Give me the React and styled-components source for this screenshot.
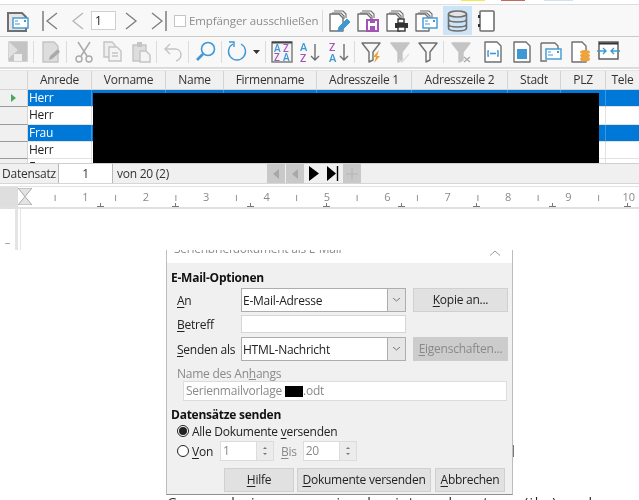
import React from 'react';
import styled, { createGlobalStyle } from 'styled-components';

const Global = createGlobalStyle`
  html, body { margin: 0; padding: 0; background: #fff; }
  body { font-family: "Open Sans", "Noto Sans", sans-serif; color: #333; letter-spacing: -0.25px; }
`;

const Page = styled.div`
  position: relative;
  width: 639px;
  height: 500px;
  overflow: hidden;
  background: #fff;
  filter: blur(0.35px);
`;

const TopStrip = styled.div`
  height: 4px;
  display: flex;
  padding-left: 461px;
  border-bottom: 1px solid #dedede;
  background: #fff;
`;
const TabMark = styled.div`
  width: ${p => p.$w}px;
  margin-right: ${p => p.$mr}px;
  height: 1px;
  background: ${p => p.$c};
`;

const Toolbar = styled.div`
  height: ${p => p.$h}px;
  display: flex;
  align-items: center;
  background: #f8f8f8;
  border-bottom: ${p => p.$line};
`;
const Tool = styled.div`
  flex: none;
  width: ${p => p.$w}px;
  height: ${p => p.$h || 22}px;
  margin-left: ${p => p.$ml}px;
  display: flex;
  align-items: center;
  justify-content: center;
  background: ${p => (p.$on ? '#cde4f7' : 'transparent')};
  svg { display: block; overflow: visible; }
`;
const Sep = styled.div`
  flex: none;
  width: 1px;
  height: 22px;
  margin-left: ${p => p.$ml}px;
  background: #dcdcdc;
`;
const PageInput = styled.div`
  flex: none;
  width: 25px;
  height: 19px;
  margin-left: ${p => p.$ml}px;
  box-sizing: border-box;
  border: 1px solid #d0d0d0;
  background: #fff;
  font-size: 12px;
  line-height: 17px;
  padding-left: 3px;
  color: #222;
`;
const Check = styled.div`
  flex: none;
  width: 12px;
  height: 12px;
  margin-left: 7px;
  border: 1px solid #c4c4c4;
  background: #fff;
  box-sizing: border-box;
`;
const CheckLabel = styled.span`
  flex: none;
  margin-left: 3px;
  font-size: 11.5px;
  letter-spacing: -0.1px;
  color: #8c8c8c;
  white-space: nowrap;
  width: 130px;
`;

const Table = styled.div`
  position: relative;
  height: 93px;
  margin-top: 1px;
  overflow: hidden;
  display: grid;
  grid-template-columns: 28px 64px 74px 58px 93px 95px 96px 53px 45px 34px;
  grid-template-rows: 19px repeat(5, 17.3px);
  background: #fff;
  border-top: 1px solid #e4e4e4;
  box-sizing: border-box;
`;
const Head = styled.div`
  background: #f0f0f0;
  border-right: 1px solid #d4d4d4;
  border-bottom: 1px solid #d4d4d4;
  font-size: 12px;
  line-height: 18px;
  text-align: center;
  color: #333;
  white-space: nowrap;
  overflow: hidden;
`;
const RowHead = styled.div`
  background: #f0f0f0;
  border-right: 1px solid #d4d4d4;
  border-bottom: 1px solid #9a9a9a;
  display: flex;
  align-items: center;
  justify-content: center;
`;
const Cell = styled.div`
  background: ${p => (p.$sel ? '#0078d7' : '#fff')};
  color: ${p => (p.$sel ? '#fff' : '#222')};
  border-right: 1px solid ${p => (p.$sel ? '#3d97e0' : '#e2e2e2')};
  border-bottom: 1px solid #e2e2e2;
  font-size: 12px;
  line-height: 16px;
  padding-left: 1px;
  overflow: hidden;
  white-space: nowrap;
`;
const Redaction = styled.div`
  position: absolute;
  left: 93px;
  top: 22px;
  width: 506px;
  height: 70px;
  background: #000;
`;
const Marker = styled.div`
  width: 0;
  height: 0;
  border-left: 5px solid #4aa85a;
  border-top: 4px solid transparent;
  border-bottom: 4px solid transparent;
`;

const NavBar = styled.div`
  height: 19px;
  display: flex;
  align-items: center;
  background: #f0f0f0;
  border-top: 1px solid #cfcfcf;
  border-bottom: 1px solid #d6d6d6;
  font-size: 12px;
  color: #333;
`;
const NavLabel = styled.div`
  width: 58px;
  padding-left: 2px;
  box-sizing: border-box;
  white-space: nowrap;
`;
const NavField = styled.div`
  width: 55px;
  height: 19px;
  background: #fff;
  border-left: 1px solid #b8b8b8;
  border-right: 1px solid #b8b8b8;
  box-sizing: border-box;
  text-align: center;
  line-height: 19px;
`;
const NavCount = styled.div`
  width: 154px;
  padding-left: 4px;
  box-sizing: border-box;
`;
const NavBtn = styled.div`
  flex: none;
  width: ${p => p.$w || 18}px;
  height: 19px;
  margin-right: 1px;
  background: ${p => (p.$off ? '#c9c9c9' : '#f0f0f0')};
  display: flex;
  align-items: center;
  justify-content: center;
`;

const RulerWrap = styled.div`
  position: relative;
  margin-top: 2px;
  height: 20px;
  display: flex;
  background: #fff;
  border-top: 1px solid #e2e2e2;
  border-bottom: 2px solid #e0e0e0;
`;
const RulerGrey = styled.div`
  flex: none;
  width: 18px;
  background: #dedede;
`;
const Hourglass = styled.svg`
  position: absolute;
  left: 18px;
  top: 1px;
`;
const RulerScale = styled.div`
  margin-left: 22px;
  display: flex;
  align-items: center;
`;
const RulerCell = styled.div`
  flex: none;
  width: 30.2px;
  text-align: center;
  font-size: 11px;
  line-height: 14px;
  color: #8a8a8a;
`;
const TabStops = styled.div`
  position: absolute;
  left: 96.5px;
  bottom: 0;
  display: flex;
`;
const TabStop = styled.div`
  flex: none;
  position: relative;
  width: 75.4px;
  height: 4px;
  &::before {
    content: "";
    position: absolute;
    left: 3px;
    top: 0;
    width: 1px;
    height: 4px;
    background: #777;
  }
  &::after {
    content: "";
    position: absolute;
    left: 0;
    bottom: 0;
    width: 7px;
    height: 1px;
    background: #777;
  }
`;

const DocArea = styled.div`
  display: flex;
  height: 291px;
  background: #fff;
`;
const VRuler = styled.div`
  flex: none;
  width: 18px;
  height: 41px;
  border-right: 3px solid #e4e4e4;
  display: flex;
  align-items: flex-end;
  justify-content: center;
  padding-bottom: 6px;
  box-sizing: border-box;
  margin-right: 2px;
`;
const VTick = styled.div`
  width: 5px;
  height: 1px;
  background: #aaa;
`;
const VEdge = styled.div`
  flex: none;
  width: 1px;
  height: 41px;
  background: #e4e4e4;
`;
const DocText = styled.div`
  margin: 285px 0 0 146px;
  height: 6px;
  font-size: 14px;
  line-height: 18px;
  color: #222;
  white-space: nowrap;
  letter-spacing: 1.6px;
`;
const SideMark = styled.div`
  position: absolute;
  left: 512px;
  top: 445px;
  width: 2px;
  height: 12px;
  background: #777;
`;

const Dialog = styled.div`
  position: absolute;
  left: 166px;
  top: 250px;
  width: 347px;
  height: 245px;
  box-sizing: border-box;
  overflow: hidden;
  background: #f0f0f0;
  border-left: 1px solid #bdbdbd;
  border-right: 1px solid #bdbdbd;
  border-bottom: 1px solid #8f8f8f;
  font-size: 12px;
  color: #222;
`;
const TitleBar = styled.div`
  height: 13px;
  background: #fff;
  display: flex;
  justify-content: space-between;
  overflow: hidden;
  padding: 0 12px 0 7px;
`;
const TitleText = styled.div`
  margin-top: -9px;
  font-size: 12px;
  line-height: 16px;
  color: #8d8d8d;
  white-space: nowrap;
`;
const Body = styled.div`
  padding: 7px 5px 0 4px;
  display: flex;
  flex-direction: column;
`;
const Section = styled.div`
  margin-top: ${p => p.$mt || 0}px;
  font-weight: 700;
  font-size: 12px;
  line-height: 16px;
  color: #111;
`;
const FormRow = styled.div`
  display: flex;
  align-items: center;
  height: ${p => p.$h}px;
  margin-top: ${p => p.$mt || 0}px;
  padding-left: ${p => p.$pl || 6}px;
`;
const FieldLabel = styled.div`
  flex: none;
  width: 64px;
  white-space: nowrap;
  u { text-underline-offset: 2px; }
`;
const Combo = styled.div`
  flex: none;
  width: 165px;
  height: 24px;
  box-sizing: border-box;
  display: flex;
  background: #fff;
  border: 1px solid #adadad;
  line-height: 23px;
  padding-left: 1px;
`;
const ComboText = styled.div`
  flex: 1;
`;
const ComboArrow = styled.div`
  flex: none;
  width: 17px;
  background: #e6e6e6;
  border-left: 1px solid #adadad;
  display: flex;
  align-items: center;
  justify-content: center;
`;
const TextField = styled.div`
  flex: none;
  width: 165px;
  height: 18px;
  box-sizing: border-box;
  background: #fff;
  border: 1px solid #d6d6d6;
`;
const Btn = styled.div`
  flex: none;
  width: ${p => p.$w}px;
  height: 24px;
  margin-left: ${p => p.$ml || 0}px;
  box-sizing: border-box;
  text-align: center;
  line-height: 22px;
  white-space: nowrap;
  overflow: hidden;
  background: ${p => (p.$off ? '#cccccc' : '#e1e1e1')};
  border: 1px solid ${p => (p.$off ? '#cccccc' : '#d0d0d0')};
  color: ${p => (p.$off ? '#8a8a8a' : '#222')};
  u { text-underline-offset: 2px; }
`;
const AttachLabel = styled.div`
  margin-top: 5px;
  padding-left: 6px;
  line-height: 16px;
  color: #8a8a8a;
`;
const AttachField = styled.div`
  margin: -1px 0 0 12px;
  width: 324px;
  height: 20px;
  box-sizing: border-box;
  background: #fff;
  border: 1px solid #dcdcdc;
  color: #8a8a8a;
  line-height: 18px;
  padding-left: 2px;
  white-space: nowrap;
  display: flex;
  align-items: center;
`;
const Blackout = styled.span`
  display: inline-block;
  width: 18px;
  height: 11px;
  margin: 0 0 0 3px;
  background: #000;
`;
const Radio = styled.div`
  flex: none;
  width: 12px;
  height: 12px;
  margin-right: 3px;
  box-sizing: border-box;
  border-radius: 50%;
  border: 1px solid #222;
  background: #fff;
  display: flex;
  align-items: center;
  justify-content: center;
  &::after {
    content: "";
    width: 8px;
    height: 8px;
    border-radius: 50%;
    background: ${p => (p.$on ? '#222' : 'transparent')};
  }
`;
const Spin = styled.div`
  flex: none;
  width: 54px;
  height: 20px;
  margin-left: ${p => p.$ml}px;
  box-sizing: border-box;
  display: flex;
  background: #fff;
  border: 1px solid #dcdcdc;
  color: #8a8a8a;
  line-height: 18px;
  padding-left: 2px;
`;
const SpinValue = styled.div`
  flex: 1;
`;
const SpinArrows = styled.div`
  flex: none;
  width: 16px;
  background: #ececec;
  border-left: 1px solid #dcdcdc;
  display: flex;
  flex-direction: column;
  align-items: center;
  justify-content: space-evenly;
`;
const Arrow = styled.div`
  width: 0;
  height: 0;
  border-left: 2px solid transparent;
  border-right: 2px solid transparent;
  ${p => (p.$up ? 'border-bottom: 2px solid #777;' : 'border-top: 2px solid #777;')}
`;
const MutedLabel = styled.div`
  flex: none;
  margin-left: 7px;
  color: #8a8a8a;
  u { text-underline-offset: 2px; }
`;
const Label = styled.div`
  flex: none;
  white-space: nowrap;
  u { text-underline-offset: 2px; }
`;
const Footer = styled.div`
  display: flex;
  margin-top: 7px;
  padding-left: 53px;
`;

const G = '#6f6f6f';
const L = '#c4c4c4';
const B = '#3f97d3';
const P = '#a552b8';

const Svg = ({ w = 22, h = 22, children }) => (
  <svg width={w} height={h} viewBox={`0 0 ${w} ${h}`} fill="none" strokeWidth="1.4">{children}</svg>
);
const Doc = ({ c = G, x = 1, y = 1, w = 14, h = 19 }) => (
  <path d={`M${x} ${y}h${w - 4}l4 4v${h - 4}h-${w}z`} stroke={c} fill="#fff" strokeLinejoin="round" />
);
const Stack = ({ c = G }) => (
  <>
    <path d="M5 1h9l3 3v4" stroke={c} strokeWidth="1.1" />
    <path d="M3 3h9l3 3v3" stroke={c} strokeWidth="1.1" />
    <Doc c={c} x={1} y={4} w={13} h={17} />
  </>
);
const Envelope = ({ x = 9, y = 9, w = 12, h = 9 }) => (
  <g>
    <rect x={x} y={y} width={w} height={h} fill="#fff" stroke={B} />
    <path d={`M${x + 2} ${y + 3}h3M${x + 2} ${y + 6}h5`} stroke={B} strokeWidth="1" />
    <rect x={x + w - 4} y={y + 2} width="2" height="2" fill={B} />
  </g>
);
const Chev = ({ dir = 'l', c = '#7d7d7d', bar }) => (
  <Svg w={bar ? 17 : 14} h={20}>
    {dir === 'l'
      ? <path d={`M${bar ? 15 : 12} 2L${bar ? 5 : 2} 10l10 8`} stroke={c} strokeWidth="1.3" />
      : <path d="M2 2l10 8-10 8" stroke={c} strokeWidth="1.3" />}
    {bar && <path d={dir === 'l' ? 'M1 0v20' : 'M16 0v20'} stroke={c} strokeWidth="1.5" />}
  </Svg>
);
const SortLetters = ({ top, bottom, topC, bottomC }) => (
  <Svg w={22} h={22}>
    <text x="0" y="10" fontSize="11" fontFamily="Open Sans" fontWeight="600" fill={topC}>{top}</text>
    <text x="0" y="21" fontSize="11" fontFamily="Open Sans" fontWeight="600" fill={bottomC}>{bottom}</text>
    <path d="M15 3v16M11 15l4 4 4-4" stroke={G} />
  </Svg>
);
const Funnel = ({ c = G, children }) => (
  <Svg w={20} h={22}>
    <path d="M1 2h18l-7 9v8l-4 2V11z" stroke={c} fill={c === L ? L : 'none'} strokeLinejoin="round" />
    {children}
  </Svg>
);

const columns = ['', 'Anrede', 'Vorname', 'Name', 'Firmenname', 'Adresszeile 1', 'Adresszeile 2', 'Stadt', 'PLZ', 'Tele'];
const rows = [
  { v: 'Herr', sel: true, mark: true },
  { v: 'Herr' },
  { v: 'Frau', sel: true },
  { v: 'Herr' },
  { v: 'Frau' },
];
const ticks = [null, 1, null, 2, null, 3, null, 4, null, 5, null, 6, null, 7, null, 8, null, 9, null, 10];

export default function App() {
  return (
    <Page>
      <Global />
      <TopStrip>
        <TabMark $w={24} $mr={16} $c="#f5e84e" />
        <TabMark $w={24} $mr={19} $c="#c9675f" />
        <TabMark $w={29} $mr={0} $c="#cfe3f5" />
      </TopStrip>

      <Toolbar $h={31} $line="1px solid #c9c9c9">
        <Tool $w={22} $ml={7}>
          <Svg><path d="M1 3h14l4 4v14H1z" stroke={G} fill="#e6e6e6" strokeWidth="2" /><Envelope x={6} y={8} w={15} h={10} /></Svg>
        </Tool>
        <Tool $w={17} $ml={13}><Chev bar /></Tool>
        <Tool $w={14} $ml={12}><Chev c="#b5b5b5" /></Tool>
        <PageInput $ml={6}>1</PageInput>
        <Tool $w={14} $ml={8}><Chev dir="r" /></Tool>
        <Tool $w={17} $ml={12}><Chev dir="r" bar /></Tool>
        <Check />
        <CheckLabel>Empfänger ausschließen</CheckLabel>
        <Sep $ml={3} />
        <Tool $w={22} $ml={6}>
          <Svg><Stack /><path d="M9 21l1-4 8-8 3 3-8 8z" fill={B} stroke={B} strokeWidth="1" /></Svg>
        </Tool>
        <Tool $w={22} $ml={6}>
          <Svg><Stack /><rect x="10" y="10" width="11" height="11" fill="#fff" stroke={P} strokeWidth="2" /><rect x="13" y="10" width="5" height="3" fill={P} /><rect x="13" y="16" width="5" height="5" fill={P} /></Svg>
        </Tool>
        <Tool $w={23} $ml={7}>
          <Svg w={23}><Stack /><rect x="12" y="9" width="6" height="4" fill="#fff" stroke="#333" /><rect x="9" y="13" width="13" height="5" fill="#333" /><rect x="12" y="17" width="7" height="4" fill="#fff" stroke="#333" /></Svg>
        </Tool>
        <Tool $w={23} $ml={6}>
          <Svg w={23}><Stack /><Envelope x={8} y={8} w={14} h={10} /></Svg>
        </Tool>
        <Tool $w={29} $h={29} $ml={5} $on>
          <Svg w={21} h={22}>
            <ellipse cx="10.5" cy="4" rx="9" ry="3" stroke={G} strokeWidth="1.6" fill="#e4e4e4" />
            <path d="M1.5 4v14c0 2 4 3 9 3s9-1 9-3V4M1.5 9c0 2 4 3 9 3s9-1 9-3M1.5 14c0 2 4 3 9 3s9-1 9-3" stroke={G} strokeWidth="1.6" />
          </Svg>
        </Tool>
        <Tool $w={17} $ml={6}>
          <Svg w={17}><rect x="2" y="1" width="14" height="20" rx="1" stroke={G} strokeWidth="1.6" fill="#fff" /><path d="M1 5v3M1 14v3" stroke="#333" strokeWidth="2" /></Svg>
        </Tool>
      </Toolbar>

      <Toolbar $h={30} $line="2px solid #dcdcdc">
        <Tool $w={20} $ml={8}>
          <Svg w={20}><path d="M1 1h18v19H1z" fill={L} stroke={L} /><path d="M1 1l9 8-9 8z" fill="#e0e0e0" /><rect x="6" y="13" width="8" height="7" fill="#efefef" /></Svg>
        </Tool>
        <Sep $ml={5} />
        <Tool $w={19} $ml={8}>
          <Svg w={19}><path d="M1 1h11l4 4v16H1z" fill="#ddd" stroke={L} /><path d="M7 19l1-4 8-7 2 3-8 7z" fill="#aaa" /></Svg>
        </Tool>
        <Sep $ml={5} />
        <Tool $w={20} $ml={7}>
          <Svg w={20}><path d="M4 1l9 14M16 1L7 15" stroke="#aaa" strokeWidth="1.5" /><circle cx="5" cy="18" r="3" stroke="#aaa" /><circle cx="15" cy="18" r="3" stroke="#aaa" /></Svg>
        </Tool>
        <Tool $w={19} $ml={9}>
          <Svg w={19}><path d="M1 1h8l3 3v12H1z" stroke={L} fill="#eee" /><path d="M6 6h8l4 4v10H6z" stroke={L} fill="#f4f4f4" /><path d="M9 12h6M9 15h6" stroke={L} /></Svg>
        </Tool>
        <Tool $w={19} $ml={10}>
          <Svg w={19}><path d="M1 4h13v16H1z" stroke={L} fill="#ddd" /><rect x="5" y="1" width="5" height="5" fill={L} /><path d="M8 10h6l4 4v7H8z" stroke={L} fill="#f4f4f4" /></Svg>
        </Tool>
        <Sep $ml={5} />
        <Tool $w={19} $ml={7}>
          <Svg w={19}><path d="M6 3L1 8l5 5M1 8h10c4 0 6 3 6 6s-2 5-5 6" stroke={L} /></Svg>
        </Tool>
        <Sep $ml={5} />
        <Tool $w={20} $ml={7}>
          <Svg w={20}><circle cx="12" cy="8" r="6.5" stroke={B} strokeWidth="1.6" /><path d="M7 13l-6 6" stroke={B} strokeWidth="2.6" /></Svg>
        </Tool>
        <Sep $ml={5} />
        <Tool $w={20} $ml={5}>
          <Svg w={20}><path d="M6 3a8.5 8.5 0 1 0 8 0" stroke={B} strokeWidth="1.4" /><path d="M2 1h5v5" stroke={B} /></Svg>
        </Tool>
        <Tool $w={7} $ml={6}>
          <Svg w={7} h={4}><path d="M0 0h7L3.5 4z" fill="#333" /></Svg>
        </Tool>
        <Sep $ml={5} />
        <Tool $w={22} $ml={5}>
          <Svg>
            <rect x="1" y="1" width="20" height="20" fill="#f4f4f4" stroke="#777" />
            <path d="M1 1.5h20" stroke="#444" strokeWidth="2" />
            <text x="3" y="11" fontSize="10" fontFamily="Open Sans" fontWeight="600" fill={B}>A</text>
            <text x="12" y="11" fontSize="10" fontFamily="Open Sans" fontWeight="600" fill={P}>Z</text>
            <text x="3" y="20" fontSize="10" fontFamily="Open Sans" fontWeight="600" fill={P}>Z</text>
            <text x="12" y="20" fontSize="10" fontFamily="Open Sans" fontWeight="600" fill={B}>A</text>
          </Svg>
        </Tool>
        <Tool $w={22} $ml={7}><SortLetters top="A" bottom="Z" topC={B} bottomC={P} /></Tool>
        <Tool $w={22} $ml={7}><SortLetters top="Z" bottom="A" topC={P} bottomC={B} /></Tool>
        <Sep $ml={3} />
        <Tool $w={20} $ml={6}>
          <Funnel><path d="M18 9l-6 7h3l-2 6 6-7h-3z" fill="#f0a030" /></Funnel>
        </Tool>
        <Tool $w={20} $ml={9}><Funnel c={L}><path d="M9 19l3 2 7-8" stroke="#ddd" /></Funnel></Tool>
        <Tool $w={20} $ml={8}><Funnel /></Tool>
        <Sep $ml={5} />
        <Tool $w={20} $ml={7}><Funnel c={L}><path d="M13 16l6 5M19 16l-6 5" stroke="#aaa" /></Funnel></Tool>
        <Tool $w={18} $ml={13}>
          <Svg w={18}><Doc w={16} h={20} /><path d="M5 10H4v5h1M13 10h1v5h-1" stroke={B} /><path d="M6 12.5h6" stroke={B} strokeWidth="1.6" /></Svg>
        </Tool>
        <Tool $w={18} $ml={11}>
          <Svg w={18}><Doc w={16} h={20} /><rect x="4" y="8" width="10" height="10" fill={B} /></Svg>
        </Tool>
        <Tool $w={22} $ml={9}>
          <Svg><path d="M1 2h14l3 3v3M1 2v18h6" stroke={G} /><Envelope x={6} y={8} w={15} h={10} /></Svg>
        </Tool>
        <Tool $w={20} $ml={9}>
          <Svg w={20}>
            <Doc w={14} h={20} />
            <ellipse cx="14" cy="11" rx="5" ry="2" fill="#eda33f" />
            <ellipse cx="14" cy="14.5" rx="5" ry="2" fill="#eda33f" />
            <ellipse cx="14" cy="18" rx="5" ry="2.5" fill="#eda33f" />
          </Svg>
        </Tool>
        <Tool $w={23} $ml={6}>
          <Svg w={23}>
            <rect x="2" y="1" width="19" height="17" fill="#fff" stroke="#555" />
            <path d="M2 2.5h19" stroke="#333" strokeWidth="2" />
            <path d="M0 10h9M6 7l3 3-3 3M23 10h-9M17 7l-3 3 3 3" stroke={B} />
          </Svg>
        </Tool>
      </Toolbar>

      <Table>
        {columns.map((c, i) => <Head key={i}>{c}</Head>)}
        {rows.map((r, i) => (
          <React.Fragment key={i}>
            <RowHead>{r.mark && <Marker />}</RowHead>
            <Cell $sel={r.sel}>{r.v}</Cell>
            {columns.slice(2).map(c => <Cell key={c} $sel={r.sel} />)}
          </React.Fragment>
        ))}
        <Redaction />
      </Table>

      <NavBar>
        <NavLabel>Datensatz</NavLabel>
        <NavField>1</NavField>
        <NavCount>von 20 (2)</NavCount>
        <NavBtn $off>
          <Svg w={8} h={12}><path d="M7 1v10L1 6z" fill="#a8a8a8" /></Svg>
        </NavBtn>
        <NavBtn $off>
          <Svg w={8} h={12}><path d="M7 1v10L1 6z" fill="#a8a8a8" /></Svg>
        </NavBtn>
        <NavBtn>
          <Svg w={10} h={15}><path d="M0 0v15l10-7.5z" fill="#000" /></Svg>
        </NavBtn>
        <NavBtn>
          <Svg w={12} h={15}><path d="M0 0v15l9-7.5z" fill="#000" /><path d="M10.5 0v15" stroke="#000" strokeWidth="1.4" /></Svg>
        </NavBtn>
        <NavBtn $off $w={18}>
          <Svg w={12} h={12}><path d="M6 0v12M0 6h12" stroke="#b4b4b4" strokeWidth="1" /></Svg>
        </NavBtn>
      </NavBar>

      <RulerWrap>
        <RulerGrey />
        <Hourglass width="14" height="17" viewBox="0 0 14 17">
          <path d="M0 0h14L7 8.5 14 17H0L7 8.5z" fill="#e4e4e4" stroke="#a8a8a8" />
        </Hourglass>
        <RulerScale>
          {ticks.map((t, i) => <RulerCell key={i}>{t === null ? '\u0131' : t}</RulerCell>)}
        </RulerScale>
        <TabStops>
          {[0, 1, 2, 3, 4, 5, 6, 7].map(i => <TabStop key={i} />)}
        </TabStops>
      </RulerWrap>

      <DocArea>
        <VRuler><VTick /></VRuler>
        <VEdge />
        <DocText>Gruppe bei uns zu sein, das ist auch gut so. (ihr) und</DocText>
      </DocArea>

      <SideMark />

      <Dialog>
        <TitleBar>
          <TitleText>Serienbriefdokument als E-Mail</TitleText>
          <Svg w={10} h={6}><path d="M0 5.5L5 1l5 4.5" stroke="#999" strokeWidth="1" /></Svg>
        </TitleBar>
        <Body>
          <Section>E-Mail-Optionen</Section>
          <FormRow $h={24} $mt={2}>
            <FieldLabel><u>A</u>n</FieldLabel>
            <Combo>
              <ComboText>E-Mail-Adresse</ComboText>
              <ComboArrow><Svg w={7} h={4}><path d="M0 0l3.5 3L7 0" stroke="#777" strokeWidth="1" /></Svg></ComboArrow>
            </Combo>
            <Btn $w={95} $ml={7}><u>K</u>opie an...</Btn>
          </FormRow>
          <FormRow $h={18} $mt={3}>
            <FieldLabel><u>B</u>etreff</FieldLabel>
            <TextField />
          </FormRow>
          <FormRow $h={24} $mt={4}>
            <FieldLabel><u>S</u>enden als</FieldLabel>
            <Combo>
              <ComboText>HTML-Nachricht</ComboText>
              <ComboArrow><Svg w={7} h={4}><path d="M0 0l3.5 3L7 0" stroke="#777" strokeWidth="1" /></Svg></ComboArrow>
            </Combo>
            <Btn $w={95} $ml={7} $off><u>E</u>igenschaften...</Btn>
          </FormRow>
          <AttachLabel>Name des An<u>h</u>angs</AttachLabel>
          <AttachField>Serienmailvorlage<Blackout />.odt</AttachField>
          <Section $mt={6}>Datensätze senden</Section>
          <FormRow $h={16}>
            <Radio $on />
            <Label>Alle Dokumente <u>v</u>ersenden</Label>
          </FormRow>
          <FormRow $h={20} $mt={2}>
            <Radio />
            <Label><u>V</u>on</Label>
            <Spin $ml={7}>
              <SpinValue>1</SpinValue>
              <SpinArrows><Arrow $up /><Arrow /></SpinArrows>
            </Spin>
            <MutedLabel><u>B</u>is</MutedLabel>
            <Spin $ml={6}>
              <SpinValue>20</SpinValue>
              <SpinArrows><Arrow $up /><Arrow /></SpinArrows>
            </Spin>
          </FormRow>
          <Footer>
            <Btn $w={70}><u>H</u>ilfe</Btn>
            <Btn $w={134} $ml={3}><u>D</u>okumente versenden</Btn>
            <Btn $w={70} $ml={4}><u>A</u>bbrechen</Btn>
          </Footer>
        </Body>
      </Dialog>
    </Page>
  );
}
